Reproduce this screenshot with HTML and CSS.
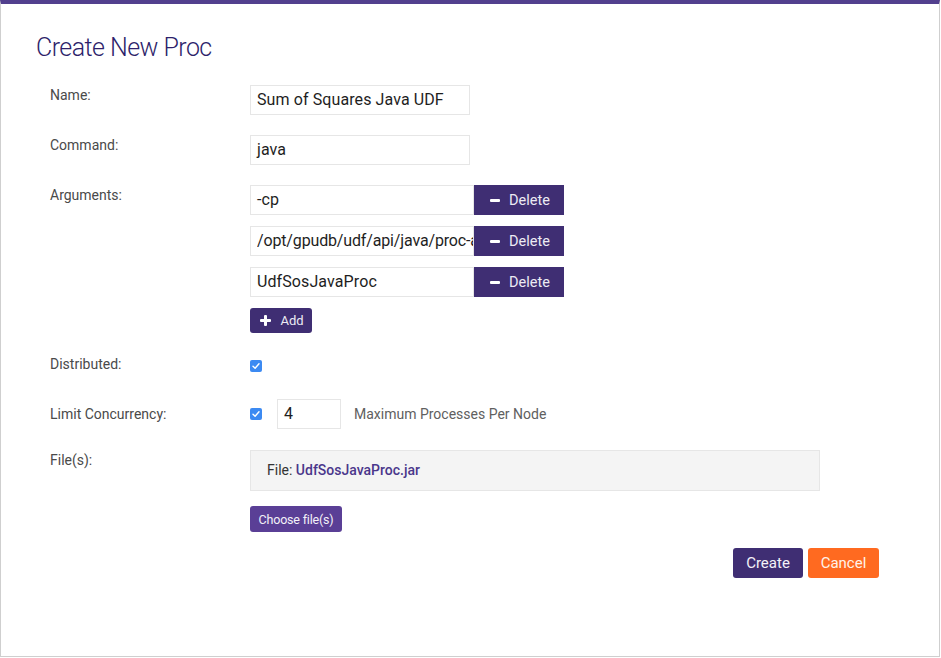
FILE: index.html
```html
<!DOCTYPE html>
<html>
<head>
<meta charset="utf-8">
<link rel="stylesheet" href="styles.css">
</head>
<body>
<div class="modal">
  <h1 class="title">Create New Proc</h1>
  <div class="form">
    <div class="row row-name">
      <div class="label">Name:</div>
      <div class="field"><div class="input w220">Sum of Squares Java UDF</div></div>
    </div>
    <div class="row row-cmd">
      <div class="label">Command:</div>
      <div class="field"><div class="input w220">java</div></div>
    </div>
    <div class="row row-args">
      <div class="label">Arguments:</div>
      <div class="field args">
        <div class="arg">
          <div class="input w224">-cp</div>
          <button class="btn-del"><span class="minus"></span>Delete</button>
        </div>
        <div class="arg">
          <div class="input w224 clip"><span class="clip-text">/opt/gpudb/udf/api/java/proc-api.jar</span></div>
          <button class="btn-del"><span class="minus"></span>Delete</button>
        </div>
        <div class="arg">
          <div class="input w224">UdfSosJavaProc</div>
          <button class="btn-del"><span class="minus"></span>Delete</button>
        </div>
        <button class="btn-add"><span class="plus"></span>Add</button>
      </div>
    </div>
    <div class="row row-dist">
      <div class="label">Distributed:</div>
      <div class="field"><span class="check"><svg viewBox="0 0 12 12" width="12" height="12"><path d="M3 6.2 L5.1 8.2 L9 3.8" fill="none" stroke="#fff" stroke-width="1.4" stroke-linecap="round" stroke-linejoin="round"/></svg></span></div>
    </div>
    <div class="row row-limit">
      <div class="label">Limit Concurrency:</div>
      <div class="field limit">
        <span class="check"><svg viewBox="0 0 12 12" width="12" height="12"><path d="M3 6.2 L5.1 8.2 L9 3.8" fill="none" stroke="#fff" stroke-width="1.4" stroke-linecap="round" stroke-linejoin="round"/></svg></span>
        <div class="input w64">4</div>
        <span class="hint">Maximum Processes Per Node</span>
      </div>
    </div>
    <div class="row row-files">
      <div class="label">File(s):</div>
      <div class="field files">
        <div class="file-panel">File: <span class="fname">UdfSosJavaProc.jar</span></div>
        <button class="btn-choose">Choose file(s)</button>
      </div>
    </div>
  </div>
  <div class="actions">
    <button class="btn-create">Create</button>
    <button class="btn-cancel">Cancel</button>
  </div>
</div>
</body>
</html>
```
FILE: styles.css
```css
html, body { margin: 0; padding: 0; background: #fff; }
body { font-family: Roboto, "Liberation Sans", sans-serif; }
.modal {
  box-sizing: border-box;
  width: 940px;
  height: 657px;
  border: 1px solid #cfcfcf;
  border-top: 4px solid #52408e;
  padding: 29px 0 0 35px;
  position: relative;
}
.title {
  margin: 0;
  font-size: 25px;
  line-height: 30px;
  font-weight: 300;
  letter-spacing: -0.55px;
  color: #2e1f6b;
}
.form { margin-top: 22px; padding-left: 14px; }
.row { display: grid; grid-template-columns: 200px 1fr; }
.label { font-size: 14px; line-height: 20px; color: #4a4a4a; }
.row-name, .row-cmd { margin-bottom: 20px; }
.row-args { margin-bottom: 21px; }
.row-dist { margin-bottom: 25px; }
.row-limit { margin-bottom: 21px; align-items: center; }
.input {
  box-sizing: border-box;
  height: 30px;
  border: 1px solid #e6e6e6;
  padding: 0 6px;
  font-size: 16px;
  letter-spacing: 0.1px;
  line-height: 28px;
  color: #1e1e1e;
  background: #fff;
  white-space: nowrap;
  overflow: hidden;
}
.clip { padding-right: 0; }
.clip-text { display: block; overflow: hidden; letter-spacing: -0.15px; }
.w220 { width: 220px; }
.w224 { width: 224px; }
.w64 { width: 64px; }
.args { display: flex; flex-direction: column; gap: 11px; align-items: flex-start; }
.arg { display: flex; }
.btn-del {
  box-sizing: border-box;
  width: 90px;
  height: 30px;
  border: none;
  background: #3f2e73;
  color: #ecebf3;
  font-family: Roboto, "Liberation Sans", sans-serif;
  font-size: 14.5px;
  display: flex;
  align-items: center;
  justify-content: center;
  gap: 9px;
  padding: 0 0 0 2px;
}
.minus { display: inline-block; width: 10px; height: 3px; background: #fff; border-radius: 1px; }
.btn-add {
  box-sizing: border-box;
  height: 25px;
  width: 62px;
  border: none;
  border-radius: 3px;
  background: #3f2e73;
  color: #ecebf3;
  font-family: Roboto, "Liberation Sans", sans-serif;
  font-size: 13px;
  display: flex;
  align-items: center;
  justify-content: center;
  gap: 9px;
  padding: 0 0 0 2px;
}
.plus { position: relative; display: inline-block; width: 11px; height: 11px; }
.plus::before, .plus::after { content: ""; position: absolute; background: #fff; border-radius: 1px; }
.plus::before { left: 0; top: 4px; width: 11px; height: 3px; }
.plus::after { left: 4px; top: 0; width: 3px; height: 11px; }
.check {
  display: flex;
  width: 12px;
  height: 12px;
  border-radius: 2px;
  background: #3c8af2;
  align-items: center;
  justify-content: center;
}
.row-dist .field { padding-top: 6px; }
.limit { display: flex; align-items: center; }
.limit .check { margin-right: 15px; }
.hint { margin-left: 13px; font-size: 14px; color: #606060; }
.files { display: flex; flex-direction: column; align-items: flex-start; gap: 15px; }
.file-panel {
  box-sizing: border-box;
  width: 570px;
  height: 41px;
  background: #f4f4f4;
  border: 1px solid #e6e6e6;
  padding: 0 0 0 16px;
  font-size: 14px;
  line-height: 39px;
  color: #333;
}
.fname { color: #4a378b; font-weight: 500; }
.btn-choose {
  box-sizing: border-box;
  height: 26px;
  width: 92px;
  border: none;
  border-radius: 3px;
  background: #5a3f96;
  color: #f3f1f8;
  font-family: Roboto, "Liberation Sans", sans-serif;
  font-size: 12.5px;
  padding: 0;
  letter-spacing: -0.2px;
}
.actions {
  display: flex;
  justify-content: flex-end;
  gap: 5px;
  margin-top: 16px;
  margin-right: 60px;
}
.btn-create, .btn-cancel {
  box-sizing: border-box;
  height: 30px;
  border: none;
  border-radius: 3px;
  font-family: Roboto, "Liberation Sans", sans-serif;
  font-size: 15px;
  color: #f4f2f8;
  padding: 0;
}
.btn-create { width: 70px; background: #3f2e73; }
.btn-cancel { width: 71px; background: #ff6a20; color: #fff3ea; }
```
